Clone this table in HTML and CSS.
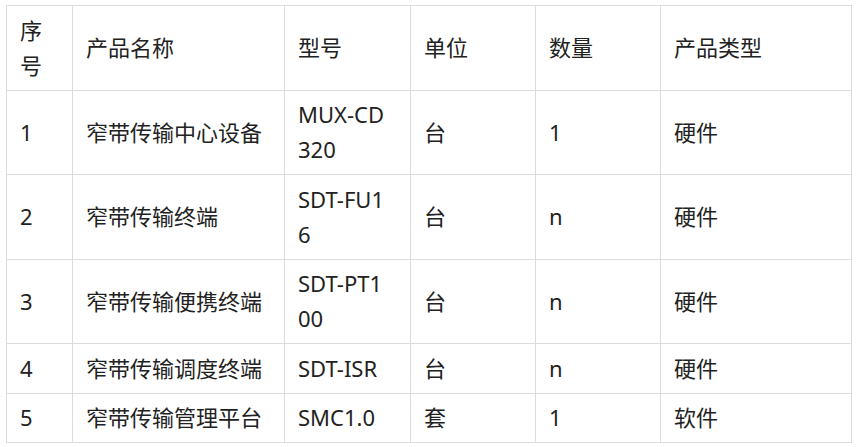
FILE: index.html
```html
<!DOCTYPE html>
<html lang="zh-CN">
<head>
<meta charset="utf-8">
<title>产品清单</title>
<link rel="stylesheet" href="styles.css">
</head>
<body>
<table class="product-table">
  <colgroup>
    <col class="c-no">
    <col class="c-name">
    <col class="c-model">
    <col class="c-unit">
    <col class="c-qty">
    <col class="c-type">
  </colgroup>
  <tbody>
    <tr><td>序号</td><td>产品名称</td><td>型号</td><td>单位</td><td>数量</td><td>产品类型</td></tr>
    <tr><td>1</td><td>窄带传输中心设备</td><td>MUX-CD320</td><td>台</td><td>1</td><td>硬件</td></tr>
    <tr><td>2</td><td>窄带传输终端</td><td>SDT-FU16</td><td>台</td><td>n</td><td>硬件</td></tr>
    <tr><td>3</td><td>窄带传输便携终端</td><td>SDT-PT100</td><td>台</td><td>n</td><td>硬件</td></tr>
    <tr><td>4</td><td>窄带传输调度终端</td><td>SDT-ISR</td><td>台</td><td>n</td><td>硬件</td></tr>
    <tr><td>5</td><td>窄带传输管理平台</td><td>SMC1.0</td><td>套</td><td>1</td><td>软件</td></tr>
  </tbody>
</table>
</body>
</html>
```

FILE: styles.css
```css
html, body {
  margin: 0;
  background: #fff;
}
body {
  padding: 5px 6px;
  font-family: "Noto Sans", "Noto Sans CJK SC", sans-serif;
  font-size: 22px;
  color: #222;
}
.product-table {
  border-collapse: collapse;
  table-layout: fixed;
  width: 846px;
}
.c-no { width: 66px; }
.c-name { width: 212px; }
.c-model { width: 126px; }
.c-unit { width: 125px; }
.c-qty { width: 125px; }
.c-type { width: 191px; }
.product-table td {
  border: 1px solid #dcdcdc;
  padding: 6.75px 20px 6.75px 13px;
  line-height: 35px;
  vertical-align: middle;
  word-break: break-all;
  text-align: left;
}
```
